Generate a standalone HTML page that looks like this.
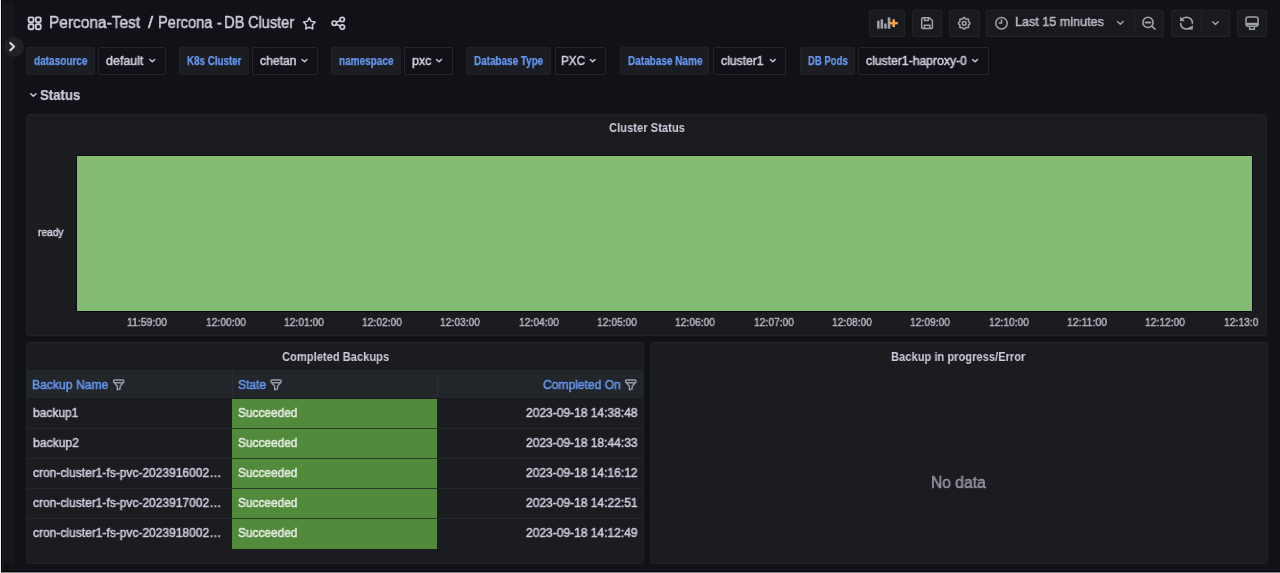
<!DOCTYPE html>
<html><head><meta charset="utf-8">
<style>
html,body{margin:0;padding:0;}
body{width:1280px;height:573px;background:#111217;position:relative;overflow:hidden;font-family:"Liberation Sans",sans-serif;}
.a{position:absolute;box-sizing:border-box;}
.t{position:absolute;white-space:nowrap;line-height:1;transform-origin:0 0;font-family:"Liberation Sans",sans-serif;will-change:transform;}
.lbl{position:absolute;box-sizing:border-box;background:#1b1d22;border:1px solid #202227;border-radius:2px;top:47.2px;height:27.6px;}
.val{position:absolute;box-sizing:border-box;background:#111217;border:1px solid #25272c;border-radius:2px;top:47.2px;height:27.6px;}
.btn{position:absolute;box-sizing:border-box;background:#181a1e;border:1px solid #222429;border-radius:2px;top:9.6px;height:27.4px;}
.panel{position:absolute;box-sizing:border-box;background:#1b1c20;border:1px solid #222428;border-radius:3.5px;}
svg{position:absolute;overflow:visible;}
</style></head><body>
<!-- screen edges -->
<div class="a" style="left:0;top:0;width:1px;height:573px;background:#ececec"></div>
<div class="a" style="left:1px;top:0;width:1px;height:571px;background:#000"></div>
<div class="a" style="left:2px;top:0;width:1px;height:571px;background:#1e1f23"></div>
<div class="a" style="left:1px;top:571px;width:1279px;height:1px;background:#000"></div>
<div class="a" style="left:1px;top:572px;width:1279px;height:1px;background:#8c8c8c"></div>
<!-- sidebar strip -->
<div class="a" style="left:4px;top:3px;width:9px;height:560px;background:#16171c;border-right:1px solid #1d1e23"></div>
<div class="a" style="left:3.5px;top:36.6px;width:20px;height:20px;border-radius:50%;background:#202227"></div>
<svg style="left:0;top:0" width="30" height="60"><path d="M10.3 42.9 L14.1 46.6 L10.3 50.3" fill="none" stroke="#d6d6de" stroke-width="2.1" stroke-linecap="round" stroke-linejoin="round"/></svg>

<!-- title icons -->
<svg style="left:0;top:0" width="360" height="40">
  <g fill="none" stroke="#ccccdc" stroke-width="1.9">
    <rect x="28.6" y="17.4" width="4.9" height="4.9" rx="1.2"/>
    <rect x="35.8" y="17.4" width="4.9" height="4.9" rx="1.2"/>
    <rect x="28.6" y="24.3" width="4.9" height="4.9" rx="1.2"/>
    <rect x="35.8" y="24.3" width="4.9" height="4.9" rx="1.2"/>
  </g>
  <path d="M309.30 17.90 L311.21 21.37 L315.10 22.11 L312.39 25.00 L312.89 28.94 L309.30 27.25 L305.71 28.94 L306.21 25.00 L303.50 22.11 L307.39 21.37 Z" fill="none" stroke="#ccccdc" stroke-width="1.5" stroke-linejoin="round"/>
  <g fill="none" stroke="#ccccdc" stroke-width="1.7">
    <circle cx="342.2" cy="19.5" r="2.2"/>
    <circle cx="334.3" cy="23.2" r="2.2"/>
    <circle cx="342.3" cy="27.1" r="2.2"/>
    <path d="M336.3 22.2 L340.2 20.5 M336.3 24.2 L340.3 26.1"/>
  </g>
</svg>

<!-- variable controls -->
<div class="lbl" style="left:26px;width:69px"></div>
<div class="val" style="left:98px;width:68px"></div>
<div class="lbl" style="left:179px;width:70px"></div>
<div class="val" style="left:252px;width:66px"></div>
<div class="lbl" style="left:331px;width:70px"></div>
<div class="val" style="left:404px;width:49px"></div>
<div class="lbl" style="left:466px;width:85px"></div>
<div class="val" style="left:555px;width:51px"></div>
<div class="lbl" style="left:620px;width:89px"></div>
<div class="val" style="left:713px;width:73px"></div>
<div class="lbl" style="left:800px;width:55px"></div>
<div class="val" style="left:858px;width:131px"></div>
<svg style="left:0;top:0" width="1000" height="80">
  <g fill="none" stroke="#ccccdc" stroke-width="1.4" stroke-linecap="round" stroke-linejoin="round">
    <path d="M149.88 59.4 L152.28 61.7 L154.68 59.4"/>
    <path d="M302.10 59.4 L304.50 61.7 L306.90 59.4"/>
    <path d="M436.65 59.4 L439.05 61.7 L441.45 59.4"/>
    <path d="M590.30 59.4 L592.70 61.7 L595.10 59.4"/>
    <path d="M770.40 59.4 L772.80 61.7 L775.20 59.4"/>
    <path d="M972.70 59.4 L975.10 61.7 L977.50 59.4"/>
  </g>
</svg>

<!-- toolbar -->
<div class="btn" style="left:869px;width:36px"></div>
<div class="btn" style="left:912px;width:30px"></div>
<div class="btn" style="left:949px;width:31px"></div>
<div class="btn" style="left:986px;width:178px"></div>
<div class="a" style="left:1134px;top:11px;width:1px;height:25px;background:#222429"></div>
<div class="btn" style="left:1171px;width:59px"></div>
<div class="a" style="left:1201px;top:11px;width:1px;height:25px;background:#222429"></div>
<div class="btn" style="left:1237px;width:30px"></div>
<svg style="left:0;top:0" width="1280" height="40">
  <defs><linearGradient id="og" x1="0" y1="0" x2="0" y2="1"><stop offset="0" stop-color="#f08a3c"/><stop offset="1" stop-color="#fbc94a"/></linearGradient></defs>
  <g fill="#a2a3ae">
    <rect x="877.1" y="20.7" width="2.5" height="7.9"/>
    <rect x="880.6" y="19.3" width="2.5" height="9.3"/>
    <rect x="884.2" y="23.5" width="2.4" height="5.1"/>
    <rect x="887.7" y="17.4" width="2.7" height="11.2"/>
  </g>
  <path d="M893.7 19.4 V26.9 M889.9 23.1 H897.6" stroke="url(#og)" stroke-width="2.1"/>
  <path d="M893.7 19.4 V26.9" stroke="#f6b245" stroke-width="2.1"/>
  <path d="M889.9 23.1 H897.6" stroke="#f3a043" stroke-width="2.1"/>
  <g fill="none" stroke="#a2a3ae" stroke-width="1.5" stroke-linejoin="round" stroke-linecap="round">
    <path d="M922.7 17.7 H929.3 L932.4 20.8 V27.5 Q932.4 28.5 931.4 28.5 H922.7 Q921.7 28.5 921.7 27.5 V18.7 Q921.7 17.7 922.7 17.7 Z"/>
    <path d="M924.4 18 V20.6 H928.4 V18"/>
    <path d="M924.4 28.3 V25.3 H929.8 V28.3"/>
  </g>
  <g fill="none" stroke="#a2a3ae" stroke-width="1.5" stroke-linejoin="round">
    <path d="M964.20 17.50 L964.50 17.53 L964.79 17.64 L965.06 17.90 L965.26 18.31 L965.44 18.66 L965.64 18.87 L965.85 19.00 L966.07 19.09 L966.31 19.15 L966.60 19.14 L966.98 19.02 L967.41 18.88 L967.78 18.88 L968.07 19.01 L968.30 19.20 L968.49 19.43 L968.62 19.72 L968.62 20.09 L968.48 20.52 L968.36 20.90 L968.35 21.19 L968.41 21.43 L968.50 21.65 L968.63 21.86 L968.84 22.06 L969.19 22.24 L969.60 22.44 L969.86 22.71 L969.97 23.00 L970.00 23.30 L969.97 23.60 L969.86 23.89 L969.60 24.16 L969.19 24.36 L968.84 24.54 L968.63 24.74 L968.50 24.95 L968.41 25.17 L968.35 25.41 L968.36 25.70 L968.48 26.08 L968.62 26.51 L968.62 26.88 L968.49 27.17 L968.30 27.40 L968.07 27.59 L967.78 27.72 L967.41 27.72 L966.98 27.58 L966.60 27.46 L966.31 27.45 L966.07 27.51 L965.85 27.60 L965.64 27.73 L965.44 27.94 L965.26 28.29 L965.06 28.70 L964.79 28.96 L964.50 29.07 L964.20 29.10 L963.90 29.07 L963.61 28.96 L963.34 28.70 L963.14 28.29 L962.96 27.94 L962.76 27.73 L962.55 27.60 L962.33 27.51 L962.09 27.45 L961.80 27.46 L961.42 27.58 L960.99 27.72 L960.62 27.72 L960.33 27.59 L960.10 27.40 L959.91 27.17 L959.78 26.88 L959.78 26.51 L959.92 26.08 L960.04 25.70 L960.05 25.41 L959.99 25.17 L959.90 24.95 L959.77 24.74 L959.56 24.54 L959.21 24.36 L958.80 24.16 L958.54 23.89 L958.43 23.60 L958.40 23.30 L958.43 23.00 L958.54 22.71 L958.80 22.44 L959.21 22.24 L959.56 22.06 L959.77 21.86 L959.90 21.65 L959.99 21.43 L960.05 21.19 L960.04 20.90 L959.92 20.52 L959.78 20.09 L959.78 19.72 L959.91 19.43 L960.10 19.20 L960.33 19.01 L960.62 18.88 L960.99 18.88 L961.42 19.02 L961.80 19.14 L962.09 19.15 L962.33 19.09 L962.55 19.00 L962.76 18.87 L962.96 18.66 L963.14 18.31 L963.34 17.90 L963.61 17.64 L963.90 17.53 Z"/>
    <circle cx="964.2" cy="23.3" r="1.9"/>
  </g>
  <g fill="none" stroke="#a2a3ae" stroke-width="1.5" stroke-linecap="round">
    <circle cx="1001.5" cy="23.2" r="5.7"/>
    <path d="M1001.5 19.9 V23 H999.3"/>
  </g>
  <path d="M1117.5 21.5 L1120.3 24.2 L1123.1 21.5" fill="none" stroke="#a2a3ae" stroke-width="1.4" stroke-linecap="round" stroke-linejoin="round"/>
  <g fill="none" stroke="#a2a3ae" stroke-width="1.6" stroke-linecap="round">
    <circle cx="1148" cy="22.4" r="5.1"/>
    <path d="M1145.6 22.4 H1150.4" stroke-width="2"/>
    <path d="M1151.9 26.3 L1155 29.2"/>
  </g>
  <g fill="none" stroke="#a2a3ae" stroke-width="1.6">
    <path d="M1182.2 19.2 A5.9 5.9 0 0 1 1192.4 23.6"/>
    <path d="M1180.6 22.9 A5.9 5.9 0 0 0 1190.8 27.1"/>
  </g>
  <path d="M1180.1 16.6 V21.2 H1184.7 Z M1192.8 24.9 V29.5 H1188.2 Z" fill="#a2a3ae"/>
  <path d="M1212.8 21.8 L1215.5 24.5 L1218.2 21.8" fill="none" stroke="#a2a3ae" stroke-width="1.4" stroke-linecap="round" stroke-linejoin="round"/>
  <g fill="none" stroke="#a2a3ae" stroke-width="1.5">
    <rect x="1246" y="17.1" width="12.1" height="9.2" rx="2.2"/>
    <path d="M1246.3 23.9 H1257.8" stroke-width="2.2"/>
    <path d="M1249.6 26.4 V29.2 H1254.4 V26.4" stroke-width="1.4"/>
  </g>
</svg>

<!-- row header -->
<svg style="left:0;top:0" width="100" height="110"><path d="M30.7 93.7 L33.4 96.3 L36.1 93.7" fill="none" stroke="#ccccdc" stroke-width="1.4" stroke-linecap="round" stroke-linejoin="round"/></svg>

<!-- panel 1 -->
<div class="panel" style="left:26px;top:114px;width:1241px;height:222px"></div>
<div class="a" style="left:76px;top:155px;width:1177px;height:157px;background:#0c0b12"></div>
<div class="a" style="left:77px;top:156px;width:1175px;height:155px;background:#83bb72"></div>

<!-- panel 2 -->
<div class="panel" style="left:26px;top:342px;width:618px;height:221.5px"></div>
<div class="a" style="left:27px;top:369.8px;width:616px;height:28.4px;background:#22252a"></div>
<div class="a" style="left:231.5px;top:371px;width:1px;height:27px;background:#2a2d32"></div>
<div class="a" style="left:436.5px;top:371px;width:1px;height:27px;background:#2a2d32"></div>
<div class="a" style="left:27px;top:428px;width:616px;height:1px;background:#24262b"></div>
<div class="a" style="left:27px;top:458px;width:616px;height:1px;background:#24262b"></div>
<div class="a" style="left:27px;top:488px;width:616px;height:1px;background:#24262b"></div>
<div class="a" style="left:27px;top:518px;width:616px;height:1px;background:#24262b"></div>
<div class="a" style="left:232px;top:398.6px;width:205px;height:150.6px;background:#518a3a"></div>
<div class="a" style="left:232px;top:428px;width:205px;height:1px;background:#2b3a25"></div>
<div class="a" style="left:232px;top:458px;width:205px;height:1px;background:#2b3a25"></div>
<div class="a" style="left:232px;top:488px;width:205px;height:1px;background:#2b3a25"></div>
<div class="a" style="left:232px;top:518px;width:205px;height:1px;background:#2b3a25"></div>
<svg style="left:0;top:0" width="700" height="400">
  <g fill="none" stroke="#9a9aa8" stroke-width="1.4" stroke-linejoin="round" stroke-linecap="round">
    <rect x="113.40" y="380" width="10.6" height="2.7" rx="1.35"/><path d="M114.30 382.8 L117.30 386.2 V389.9 L120.10 388.9 V386.2 L123.10 382.8"/>
    <rect x="270.80" y="380" width="10.6" height="2.7" rx="1.35"/><path d="M271.70 382.8 L274.70 386.2 V389.9 L277.50 388.9 V386.2 L280.50 382.8"/>
    <rect x="625.50" y="380" width="10.6" height="2.7" rx="1.35"/><path d="M626.40 382.8 L629.40 386.2 V389.9 L632.20 388.9 V386.2 L635.20 382.8"/>
  </g>
</svg>

<!-- panel 3 -->
<div class="panel" style="left:650px;top:342px;width:617.8px;height:221.5px"></div>

<!-- TEXTS -->
<div class="t" style="left:49.05px;top:14.07px;font-size:16.3px;font-weight:400;color:#ccccdc;transform:scaleX(0.9497);-webkit-text-stroke:0.5px currentColor">Percona-Test</div>
<div class="t" style="left:148.10px;top:14.07px;font-size:16.3px;font-weight:400;color:#ccccdc;transform:scaleX(1.1300);-webkit-text-stroke:0.5px currentColor">/</div>
<div class="t" style="left:157.85px;top:14.07px;font-size:16.3px;font-weight:400;color:#ccccdc;transform:scaleX(0.8971);-webkit-text-stroke:0.5px currentColor">Percona</div>
<div class="t" style="left:216.50px;top:14.07px;font-size:16.3px;font-weight:400;color:#ccccdc;transform:scaleX(0.9000);-webkit-text-stroke:0.5px currentColor">-</div>
<div class="t" style="left:224.10px;top:14.07px;font-size:16.3px;font-weight:400;color:#ccccdc;transform:scaleX(0.9033);-webkit-text-stroke:0.5px currentColor">DB</div>
<div class="t" style="left:247.75px;top:14.07px;font-size:16.3px;font-weight:400;color:#ccccdc;transform:scaleX(0.8946);-webkit-text-stroke:0.5px currentColor">Cluster</div>
<div class="t" style="left:34.00px;top:54.62px;font-size:12.5px;font-weight:700;color:#6697f0;transform:scaleX(0.8016);-webkit-text-stroke:0.25px currentColor">datasource</div>
<div class="t" style="left:186.50px;top:54.62px;font-size:12.5px;font-weight:700;color:#6697f0;transform:scaleX(0.7830);-webkit-text-stroke:0.25px currentColor">K8s Cluster</div>
<div class="t" style="left:339.00px;top:54.62px;font-size:12.5px;font-weight:700;color:#6697f0;transform:scaleX(0.7998);-webkit-text-stroke:0.25px currentColor">namespace</div>
<div class="t" style="left:473.75px;top:54.62px;font-size:12.5px;font-weight:700;color:#6697f0;transform:scaleX(0.7928);-webkit-text-stroke:0.25px currentColor">Database Type</div>
<div class="t" style="left:627.50px;top:54.62px;font-size:12.5px;font-weight:700;color:#6697f0;transform:scaleX(0.7998);-webkit-text-stroke:0.25px currentColor">Database Name</div>
<div class="t" style="left:807.70px;top:54.62px;font-size:12.5px;font-weight:700;color:#6697f0;transform:scaleX(0.7615);-webkit-text-stroke:0.25px currentColor">DB Pods</div>
<div class="t" style="left:106.00px;top:54.92px;font-size:12.5px;font-weight:400;color:#ccccdc;transform:scaleX(0.9919);-webkit-text-stroke:0.5px currentColor">default</div>
<div class="t" style="left:259.75px;top:54.92px;font-size:12.5px;font-weight:400;color:#ccccdc;transform:scaleX(0.9713);-webkit-text-stroke:0.5px currentColor">chetan</div>
<div class="t" style="left:412.25px;top:54.92px;font-size:12.5px;font-weight:400;color:#ccccdc;transform:scaleX(0.9895);-webkit-text-stroke:0.5px currentColor">pxc</div>
<div class="t" style="left:560.96px;top:54.92px;font-size:12.5px;font-weight:400;color:#ccccdc;transform:scaleX(0.9362);-webkit-text-stroke:0.5px currentColor">PXC</div>
<div class="t" style="left:721.00px;top:54.92px;font-size:12.5px;font-weight:400;color:#ccccdc;transform:scaleX(0.9722);-webkit-text-stroke:0.5px currentColor">cluster1</div>
<div class="t" style="left:866.30px;top:54.92px;font-size:12.5px;font-weight:400;color:#ccccdc;transform:scaleX(0.9743);-webkit-text-stroke:0.5px currentColor">cluster1-haproxy-0</div>
<div class="t" style="left:1014.87px;top:15.10px;font-size:13.5px;font-weight:400;color:#b9b9c5;transform:scaleX(0.9328);-webkit-text-stroke:0.5px currentColor">Last 15 minutes</div>
<div class="t" style="left:40.00px;top:86.64px;font-size:15.5px;font-weight:700;color:#ccccdc;transform:scaleX(0.8513);-webkit-text-stroke:0.25px currentColor">Status</div>
<div class="t" style="left:609.00px;top:121.82px;font-size:12.5px;font-weight:700;color:#ccccdc;transform:scaleX(0.8952);-webkit-text-stroke:0.0px currentColor">Cluster Status</div>
<div class="t" style="left:281.90px;top:350.82px;font-size:12.5px;font-weight:700;color:#ccccdc;transform:scaleX(0.8917);-webkit-text-stroke:0.0px currentColor">Completed Backups</div>
<div class="t" style="left:891.30px;top:351.12px;font-size:12.5px;font-weight:700;color:#ccccdc;transform:scaleX(0.8915);-webkit-text-stroke:0.0px currentColor">Backup in progress/Error</div>
<div class="t" style="left:930.77px;top:474.66px;font-size:16.8px;font-weight:400;color:rgba(204,204,220,0.6);transform:scaleX(0.9308);-webkit-text-stroke:0.5px currentColor">No data</div>
<div class="t" style="left:37.85px;top:227.27px;font-size:11px;font-weight:400;color:#ccccdc;transform:scaleX(0.9263);-webkit-text-stroke:0.5px currentColor">ready</div>
<div class="t" style="left:31.78px;top:378.62px;font-size:12.5px;font-weight:400;color:#6697f0;transform:scaleX(0.9715);-webkit-text-stroke:0.5px currentColor">Backup Name</div>
<div class="t" style="left:237.80px;top:378.62px;font-size:12.5px;font-weight:400;color:#6697f0;transform:scaleX(0.9646);-webkit-text-stroke:0.5px currentColor">State</div>
<div class="t" style="left:542.50px;top:378.62px;font-size:12.5px;font-weight:400;color:#6697f0;transform:scaleX(0.9647);-webkit-text-stroke:0.5px currentColor">Completed On</div>
<div class="t" style="left:32.75px;top:406.62px;font-size:12.5px;font-weight:400;color:#ccccdc;transform:scaleX(0.9586);-webkit-text-stroke:0.5px currentColor">backup1</div>
<div class="t" style="left:237.80px;top:406.62px;font-size:12.5px;font-weight:400;color:#e6ebe4;transform:scaleX(0.9497);-webkit-text-stroke:0.5px currentColor">Succeeded</div>
<div class="t" style="left:525.60px;top:406.62px;font-size:12.5px;font-weight:400;color:#ccccdc;transform:scaleX(0.9611);-webkit-text-stroke:0.5px currentColor">2023-09-18 14:38:48</div>
<div class="t" style="left:32.75px;top:436.62px;font-size:12.5px;font-weight:400;color:#ccccdc;transform:scaleX(0.9713);-webkit-text-stroke:0.5px currentColor">backup2</div>
<div class="t" style="left:237.80px;top:436.62px;font-size:12.5px;font-weight:400;color:#e6ebe4;transform:scaleX(0.9497);-webkit-text-stroke:0.5px currentColor">Succeeded</div>
<div class="t" style="left:525.60px;top:436.62px;font-size:12.5px;font-weight:400;color:#ccccdc;transform:scaleX(0.9611);-webkit-text-stroke:0.5px currentColor">2023-09-18 18:44:33</div>
<div class="t" style="left:32.75px;top:466.62px;font-size:12.5px;font-weight:400;color:#ccccdc;transform:scaleX(0.9605);-webkit-text-stroke:0.5px currentColor">cron-cluster1-fs-pvc-2023916002…</div>
<div class="t" style="left:237.80px;top:466.62px;font-size:12.5px;font-weight:400;color:#e6ebe4;transform:scaleX(0.9497);-webkit-text-stroke:0.5px currentColor">Succeeded</div>
<div class="t" style="left:525.60px;top:466.62px;font-size:12.5px;font-weight:400;color:#ccccdc;transform:scaleX(0.9611);-webkit-text-stroke:0.5px currentColor">2023-09-18 14:16:12</div>
<div class="t" style="left:32.75px;top:496.62px;font-size:12.5px;font-weight:400;color:#ccccdc;transform:scaleX(0.9605);-webkit-text-stroke:0.5px currentColor">cron-cluster1-fs-pvc-2023917002…</div>
<div class="t" style="left:237.80px;top:496.62px;font-size:12.5px;font-weight:400;color:#e6ebe4;transform:scaleX(0.9497);-webkit-text-stroke:0.5px currentColor">Succeeded</div>
<div class="t" style="left:525.60px;top:496.62px;font-size:12.5px;font-weight:400;color:#ccccdc;transform:scaleX(0.9611);-webkit-text-stroke:0.5px currentColor">2023-09-18 14:22:51</div>
<div class="t" style="left:32.75px;top:526.62px;font-size:12.5px;font-weight:400;color:#ccccdc;transform:scaleX(0.9605);-webkit-text-stroke:0.5px currentColor">cron-cluster1-fs-pvc-2023918002…</div>
<div class="t" style="left:237.80px;top:526.62px;font-size:12.5px;font-weight:400;color:#e6ebe4;transform:scaleX(0.9497);-webkit-text-stroke:0.5px currentColor">Succeeded</div>
<div class="t" style="left:525.60px;top:526.62px;font-size:12.5px;font-weight:400;color:#ccccdc;transform:scaleX(0.9611);-webkit-text-stroke:0.5px currentColor">2023-09-18 14:12:49</div>
<div class="t" style="left:127.20px;top:316.81px;font-size:11.8px;font-weight:400;color:#b4b4c0;transform:scaleX(0.8882);-webkit-text-stroke:0.5px currentColor">11:59:00</div>
<div class="t" style="left:205.50px;top:316.81px;font-size:11.8px;font-weight:400;color:#b4b4c0;transform:scaleX(0.8715);-webkit-text-stroke:0.5px currentColor">12:00:00</div>
<div class="t" style="left:283.80px;top:316.81px;font-size:11.8px;font-weight:400;color:#b4b4c0;transform:scaleX(0.8715);-webkit-text-stroke:0.5px currentColor">12:01:00</div>
<div class="t" style="left:362.10px;top:316.81px;font-size:11.8px;font-weight:400;color:#b4b4c0;transform:scaleX(0.8715);-webkit-text-stroke:0.5px currentColor">12:02:00</div>
<div class="t" style="left:440.40px;top:316.81px;font-size:11.8px;font-weight:400;color:#b4b4c0;transform:scaleX(0.8715);-webkit-text-stroke:0.5px currentColor">12:03:00</div>
<div class="t" style="left:518.70px;top:316.81px;font-size:11.8px;font-weight:400;color:#b4b4c0;transform:scaleX(0.8715);-webkit-text-stroke:0.5px currentColor">12:04:00</div>
<div class="t" style="left:597.00px;top:316.81px;font-size:11.8px;font-weight:400;color:#b4b4c0;transform:scaleX(0.8715);-webkit-text-stroke:0.5px currentColor">12:05:00</div>
<div class="t" style="left:675.30px;top:316.81px;font-size:11.8px;font-weight:400;color:#b4b4c0;transform:scaleX(0.8715);-webkit-text-stroke:0.5px currentColor">12:06:00</div>
<div class="t" style="left:753.60px;top:316.81px;font-size:11.8px;font-weight:400;color:#b4b4c0;transform:scaleX(0.8715);-webkit-text-stroke:0.5px currentColor">12:07:00</div>
<div class="t" style="left:831.90px;top:316.81px;font-size:11.8px;font-weight:400;color:#b4b4c0;transform:scaleX(0.8715);-webkit-text-stroke:0.5px currentColor">12:08:00</div>
<div class="t" style="left:910.20px;top:316.81px;font-size:11.8px;font-weight:400;color:#b4b4c0;transform:scaleX(0.8715);-webkit-text-stroke:0.5px currentColor">12:09:00</div>
<div class="t" style="left:988.50px;top:316.81px;font-size:11.8px;font-weight:400;color:#b4b4c0;transform:scaleX(0.8715);-webkit-text-stroke:0.5px currentColor">12:10:00</div>
<div class="t" style="left:1066.80px;top:316.81px;font-size:11.8px;font-weight:400;color:#b4b4c0;transform:scaleX(0.8882);-webkit-text-stroke:0.5px currentColor">12:11:00</div>
<div class="t" style="left:1145.10px;top:316.81px;font-size:11.8px;font-weight:400;color:#b4b4c0;transform:scaleX(0.8715);-webkit-text-stroke:0.5px currentColor">12:12:00</div>
<div class="t" style="left:1224.20px;top:316.81px;font-size:11.8px;font-weight:400;color:#b4b4c0;transform:scaleX(0.8769);-webkit-text-stroke:0.5px currentColor">12:13:0</div>
</body></html>
